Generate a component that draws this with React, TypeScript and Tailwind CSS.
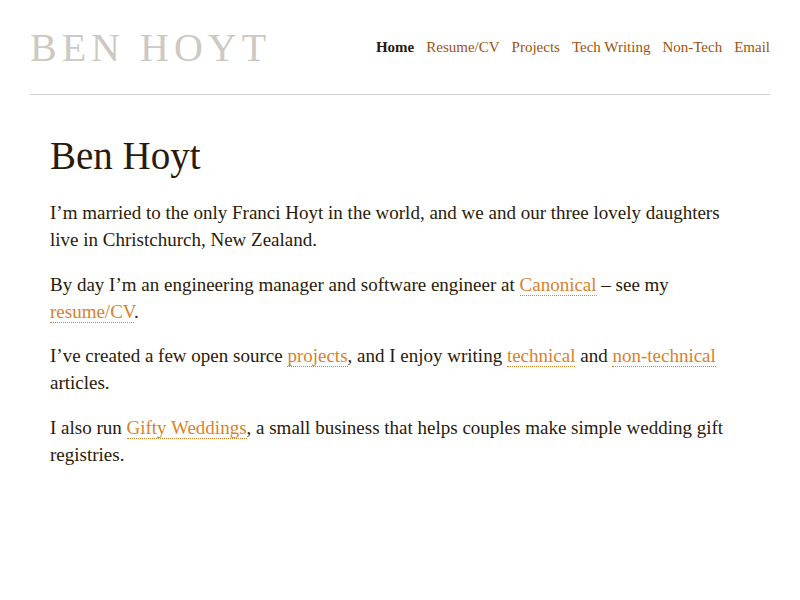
import React from "react";

const serif = { fontFamily: '"Liberation Serif", Georgia, serif' };

function L({ children }: { children: React.ReactNode }) {
  return (
    <a href="#" className="text-[#d9822b] no-underline border-b border-dotted border-[#d9822b]">
      {children}
    </a>
  );
}

export default function App() {
  return (
    <div className="min-h-[600px] bg-white text-[#2a1a0a]" style={serif}>
      <div className="mx-[30px]">
        <header className="flex items-end justify-between pt-[28px] pb-[26px] border-b border-[#d0d0d0]">
          <div className="text-[40px] leading-[40px] tracking-[5px] text-[#cdc8c2]">BEN HOYT</div>
          <nav className="flex gap-[12px] text-[15px] pb-[10px]">
            <a href="#" className="font-bold text-[#2a1a0a]">Home</a>
            <a href="#" className="text-[#a0520d]">Resume/CV</a>
            <a href="#" className="text-[#a0520d]">Projects</a>
            <a href="#" className="text-[#a0520d]">Tech Writing</a>
            <a href="#" className="text-[#a0520d]">Non-Tech</a>
            <a href="#" className="text-[#a0520d]">Email</a>
          </nav>
        </header>
        <main className="px-[20px] pt-[38px] text-[19px] leading-[27px]">
          <h1 className="text-[39px] leading-[46px] mb-[20px]">Ben Hoyt</h1>
          <p className="mb-[17.5px]">
            I’m married to the only Franci Hoyt in the world, and we and our three lovely daughters live in Christchurch, New Zealand.
          </p>
          <p className="mb-[17.5px]">
            By day I’m an engineering manager and software engineer at <L>Canonical</L> – see my <L>resume/CV</L>.
          </p>
          <p className="mb-[17.5px]">
            I’ve created a few open source <L>projects</L>, and I enjoy writing <L>technical</L> and <L>non-technical</L> articles.
          </p>
          <p className="mb-[17.5px]">
            I also run <L>Gifty Weddings</L>, a small business that helps couples make simple wedding gift registries.
          </p>
        </main>
      </div>
    </div>
  );
}
